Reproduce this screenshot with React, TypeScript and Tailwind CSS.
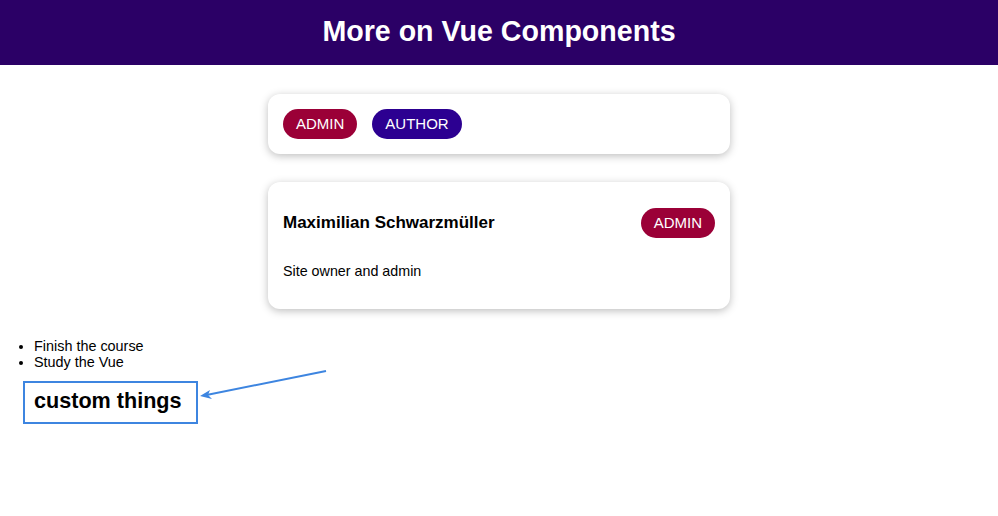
import React from 'react'

type Role = 'admin' | 'author'

function RoleBadge({ role }: { role: Role }) {
  return (
    <span
      className={`inline-flex items-center h-[30px] px-[13px] rounded-full text-white text-[15px] uppercase ${
        role === 'admin' ? 'bg-[#9b0037]' : 'bg-[#2c0091]'
      }`}
    >
      {role}
    </span>
  )
}

function BaseCard({ children }: { children: React.ReactNode }) {
  return (
    <section className="w-[462px] mx-auto bg-white rounded-xl shadow-[0_2px_8px_rgba(0,0,0,0.26)] p-[15px]">
      {children}
    </section>
  )
}

export default function App() {
  return (
    <div className="relative min-h-[516px] bg-white text-black font-['Liberation_Sans',Arial,sans-serif]">
      <header className="h-[65px] bg-[#2b0066] flex items-center justify-center pb-[3px]">
        <h1 className="text-[28.6px] font-bold text-white">More on Vue Components</h1>
      </header>

      <div className="mt-[29px]">
        <BaseCard>
          <div className="flex gap-[15px]">
            <RoleBadge role="admin" />
            <RoleBadge role="author" />
          </div>
        </BaseCard>
      </div>

      <div className="mt-[28px]">
        <BaseCard>
          <div className="flex items-center justify-between mt-[11px]">
            <h3 className="text-[17px] font-bold">Maximilian Schwarzmüller</h3>
            <RoleBadge role="admin" />
          </div>
          <p className="text-[14.3px] mt-[23px] mb-[12px]">Site owner and admin</p>
        </BaseCard>
      </div>

      <ul className="mt-[29px] pl-[34px] list-disc text-[14.4px] leading-[16px]">
        <li>Finish the course</li>
        <li>Study the Vue</li>
      </ul>

      <div className="ml-[23px] mt-[11px] w-[175px] h-[43px] border-2 border-[#3d85e0] flex items-center pl-[9px] pb-[4px]">
        <h2 className="text-[21.6px] font-bold">custom things</h2>
      </div>

      <svg className="absolute left-0 top-0" width="998" height="516" fill="none">
        <line x1="326" y1="371" x2="204" y2="395.5" stroke="#3d85e0" strokeWidth="2" />
        <path d="M200 396 L210 390 L208 395 L212 399 Z" fill="#3d85e0" />
      </svg>
    </div>
  )
}
